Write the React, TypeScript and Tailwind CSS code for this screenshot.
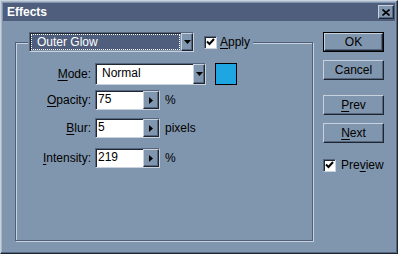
import React from "react";

const raised =
  "border border-t-[#c8d2de] border-l-[#c8d2de] border-r-[#1e2632] border-b-[#1e2632] shadow-[inset_-1px_-1px_0_#56667e]";
const sunken =
  "border border-t-[#56667e] border-l-[#56667e] border-r-[#c8d2de] border-b-[#c8d2de] shadow-[inset_1px_1px_0_#1e2632]";

function DownArrow() {
  return (
    <svg width="7" height="4" viewBox="0 0 7 4">
      <path d="M0 0h7L3.5 4z" fill="#000" />
    </svg>
  );
}

function RightArrow() {
  return (
    <svg width="4" height="7" viewBox="0 0 4 7">
      <path d="M0 0v7L4 3.5z" fill="#000" />
    </svg>
  );
}

function Check() {
  return (
    <div className={`w-[13px] h-[13px] bg-white flex items-center justify-center ${sunken}`}>
      <svg width="9" height="8" viewBox="0 0 9 8">
        <path d="M1 3.5l2.5 2.5L8 1" stroke="#000" strokeWidth="2" fill="none" />
      </svg>
    </div>
  );
}

function Spin({ value, unit }: { value: string; unit: string }) {
  return (
    <div className="flex items-center">
      <div className={`flex h-[20px] w-[65px] bg-white ${sunken}`}>
        <div className="flex-1 pl-[2px] leading-[17px] text-black">{value}</div>
        <div className={`w-[16px] h-full bg-[#8096ae] flex items-center justify-center ${raised}`}>
          <RightArrow />
        </div>
      </div>
      <span className="ml-[5px] text-black">{unit}</span>
    </div>
  );
}

function Row({
  ul,
  rest,
  children,
  cls,
}: {
  ul: string;
  rest: string;
  children: React.ReactNode;
  cls: string;
}) {
  return (
    <div className={`flex items-center ${cls}`}>
      <div className="w-[79px] text-right pr-[4px] text-black">
        <span className="underline underline-offset-[2px]">{ul}</span>
        {rest}
      </div>
      {children}
    </div>
  );
}

function Btn({ children, def }: { children: React.ReactNode; def?: boolean }) {
  const inner = (
    <div className={`h-full w-full flex items-center justify-center text-black ${raised}`}>
      {children}
    </div>
  );
  return def ? (
    <div className="h-[20px] w-[61px] border border-black">{inner}</div>
  ) : (
    <div className="h-[20px] w-[61px]">{inner}</div>
  );
}

export default function App() {
  return (
    <div
      className="w-[398px] h-[254px] bg-[#8096ae] border border-t-[#c8d2de] border-l-[#c8d2de] border-r-[#1e2632] border-b-[#1e2632] shadow-[inset_-1px_-1px_0_#56667e,inset_1px_1px_0_#a8b6c8] p-[2px] flex flex-col text-[12px]"
      style={{ fontFamily: '"Liberation Sans", Arial, sans-serif' }}
    >
      <div className="h-[18px] bg-[#4e5e7c] flex items-center justify-between pl-[4px] pr-[1px]">
        <span className="text-white font-bold text-[12px] leading-none">Effects</span>
        <div className={`w-[16px] h-[14px] bg-[#8096ae] flex items-center justify-center ${raised}`}>
          <svg width="8" height="7" viewBox="0 0 8 7">
            <path d="M0.5 0.5l7 6M7.5 0.5l-7 6" stroke="#000" strokeWidth="1.6" />
          </svg>
        </div>
      </div>
      <div className="flex">
        <fieldset className="ml-[12px] mt-[11px] w-[298px] h-[209px] border border-[#4f5f7a] shadow-[inset_1px_1px_0_#c8d2de,1px_1px_0_#c8d2de]">
          <legend className="ml-[12px] px-[1px] bg-[#8096ae] flex items-center h-[20px]">
            <div className={`flex h-[20px] w-[165px] ${sunken}`}>
              <div className="flex-1 m-[1px] bg-[#4e5e7c] border border-dotted border-white text-white leading-[14px] pl-[5px] text-[12px]">
                Outer Glow
              </div>
              <div className={`w-[12px] h-full bg-[#8096ae] flex items-center justify-center ${raised}`}>
                <DownArrow />
              </div>
            </div>
            <div className="ml-[10px]">
              <Check />
            </div>
            <span className="ml-[3px] mr-[2px] text-black">
              <span className="underline underline-offset-[2px]">A</span>pply
            </span>
          </legend>
          <div className="flex flex-col">
            <Row ul="M" rest="ode:" cls="mt-[11px]">
              <div className={`flex h-[22px] w-[111px] bg-white ${sunken}`}>
                <div className="flex-1 pl-[6px] leading-[19px] text-black">Normal</div>
                <div className={`w-[12px] h-full bg-[#8096ae] flex items-center justify-center ${raised}`}>
                  <DownArrow />
                </div>
              </div>
              <div className="ml-[9px] w-[22px] h-[22px] bg-[#1ea6e2] border border-black" />
            </Row>
            <Row ul="O" rest="pacity:" cls="mt-[5px]">
              <Spin value="75" unit="%" />
            </Row>
            <Row ul="B" rest="lur:" cls="mt-[8px]">
              <Spin value="5" unit="pixels" />
            </Row>
            <Row ul="I" rest="ntensity:" cls="mt-[10px]">
              <Spin value="219" unit="%" />
            </Row>
          </div>
        </fieldset>
        <div className="ml-[10px] mt-[11px] flex flex-col">
          <Btn def>OK</Btn>
          <div className="mt-[8px]">
            <Btn>Cancel</Btn>
          </div>
          <div className="mt-[15px]">
            <Btn>
              <span className="underline underline-offset-[2px]">P</span>rev
            </Btn>
          </div>
          <div className="mt-[8px]">
            <Btn>
              <span className="underline underline-offset-[2px]">N</span>ext
            </Btn>
          </div>
          <div className="mt-[13px] flex items-center">
            <Check />
            <span className="ml-[5px] text-black">
              Pre<span className="underline underline-offset-[2px]">v</span>iew
            </span>
          </div>
        </div>
      </div>
    </div>
  );
}
